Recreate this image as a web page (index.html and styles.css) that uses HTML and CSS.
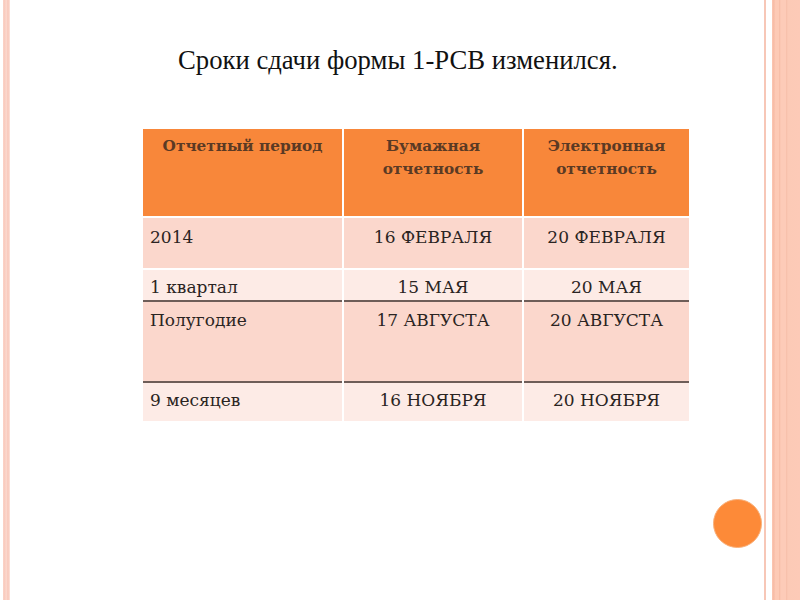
FILE: index.html
```html
<!DOCTYPE html>
<html lang="ru">
<head>
<meta charset="utf-8">
<link rel="stylesheet" href="styles.css">
</head>
<body>
<div class="slide">
  <h1 class="title">Сроки сдачи формы 1-РСВ изменился.</h1>
  <table class="grid">
    <colgroup><col class="c1"><col class="c2"><col class="c3"></colgroup>
    <tr class="head">
      <th>Отчетный период</th>
      <th>Бумажная<br>отчетность</th>
      <th>Электронная<br>отчетность</th>
    </tr>
    <tr class="r1 dark">
      <td>2014</td><td class="ctr">16 ФЕВРАЛЯ</td><td class="ctr">20 ФЕВРАЛЯ</td>
    </tr>
    <tr class="r2 light">
      <td>1 квартал</td><td class="ctr">15 МАЯ</td><td class="ctr">20 МАЯ</td>
    </tr>
    <tr class="r3 dark lined">
      <td>Полугодие</td><td class="ctr">17 АВГУСТА</td><td class="ctr">20 АВГУСТА</td>
    </tr>
    <tr class="r4 light lined">
      <td>9 месяцев</td><td class="ctr">16 НОЯБРЯ</td><td class="ctr">20 НОЯБРЯ</td>
    </tr>
  </table>
  <div class="dot"></div>
</div>
</body>
</html>
```
FILE: styles.css
```css
html, body {
  margin: 0;
  padding: 0;
}
body {
  width: 800px;
  height: 600px;
  overflow: hidden;
  background: #fff;
}
.slide {
  position: relative;
  width: 800px;
  height: 600px;
  box-sizing: border-box;
  padding-top: 44px;
  background:
    linear-gradient(to right,
      #fff 0, #fff 3px,
      #fbd3c8 3px, #f9c9bc 5px, #fcdcd3 6px, #f8c6b8 8px, #fde3dc 10px,
      #fff 10px, #fff 764px,
      #f7c7b7 764px, #f7c7b7 766px,
      #fff 766px, #fff 772px,
      #fcc8b4 772px, #f6b9a3 774px, #fdcab6 775px, #fdcab6 779px,
      #f5bba4 779px, #fdcbb8 781px, #fdcbb8 786px,
      #f6bea9 786px, #fccab6 788px, #fdcab7 800px);
}
.title {
  margin: 0 0 0 178px;
  font-family: "Liberation Serif", "Times New Roman", serif;
  font-weight: normal;
  font-size: 26.7px;
  line-height: 32px;
  color: #111;
}
.grid {
  margin: 53px 0 0 143px;
  border-collapse: collapse;
  table-layout: fixed;
  width: 546px;
  font-family: "DejaVu Serif", "Liberation Serif", serif;
}
.c1 { width: 200px; }
.c2 { width: 180px; }
.c3 { width: 166px; }
.grid th, .grid td {
  padding: 0;
  vertical-align: top;
  border-left: 2px solid #fff;
  border-right: 2px solid #fff;
  border-bottom: 2px solid #fff;
}
.grid th:first-child, .grid td:first-child { border-left: 0; }
.grid th:last-child, .grid td:last-child { border-right: 0; }
.head th {
  height: 88px;
  background: #f8873a;
  color: #5b3a24;
  font-weight: bold;
  font-size: 15.3px;
  line-height: 23px;
  padding-top: 6px;
  text-align: center;
  box-sizing: border-box;
}
.grid td {
  font-size: 17px;
  line-height: 20px;
  color: #2a2422;
  padding-left: 7px;
  box-sizing: border-box;
}
.grid td.ctr {
  text-align: center;
  padding-left: 0;
}
.dark td { background: #fbd7cc; }
.light td { background: #fdebe6; }
.r1 td { height: 52px; padding-top: 9px; }
.r2 td { height: 32px; padding-top: 7px; border-bottom: 0; }
.r3 td { height: 81px; padding-top: 8px; border-bottom: 0; }
.r4 td { height: 39px; padding-top: 7px; border-bottom: 0; }
.lined td { border-top: 2px solid #6e5d58; }
.dot {
  position: absolute;
  left: 713px;
  top: 499px;
  width: 47px;
  height: 47px;
  border-radius: 50%;
  background: #fd8a38;
  border: 1px solid #f9b07a;
}
```
